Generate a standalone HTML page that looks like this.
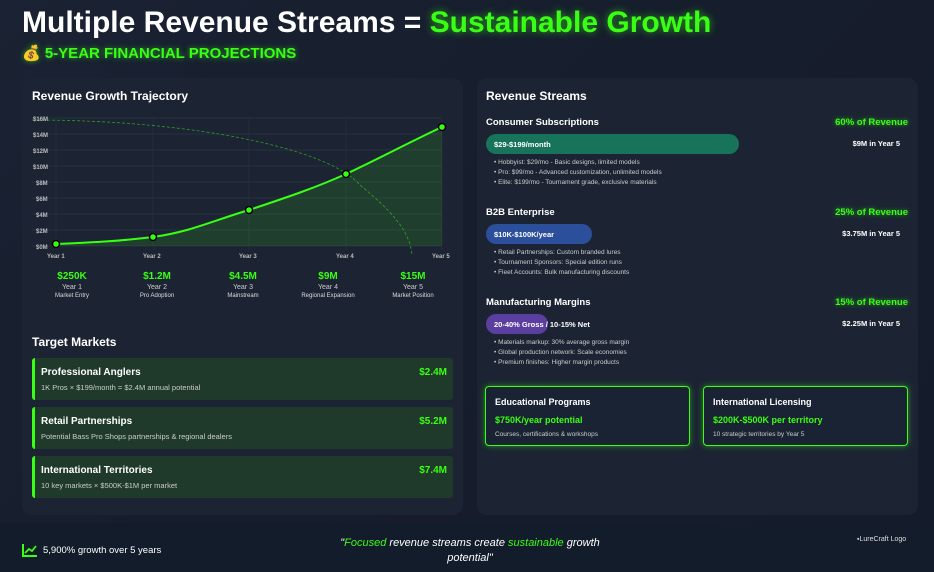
<!DOCTYPE html>
<html><head><meta charset="utf-8"><style>
*{margin:0;padding:0;box-sizing:border-box}
body{width:934px;height:572px;overflow:hidden;background:linear-gradient(135deg,#1a2233 0%,#161d2c 50%,#141b2b 100%);font-family:"Liberation Sans",sans-serif;color:#fff;position:relative}
.abs{position:absolute}
h1{position:absolute;left:22px;top:6px;font-size:30px;font-weight:bold;letter-spacing:0}
.g{color:#39ff14;text-shadow:0 0 8px rgba(57,255,20,.6)}
.sub{position:absolute;left:22px;top:44px;font-size:15px;font-weight:bold;color:#39ff14;text-shadow:0 0 6px rgba(57,255,20,.6)}
.panel{position:absolute;background:#1c2433;border-radius:10px}
.t{font-size:12px;font-weight:bold}
.vals div{position:absolute;text-align:center;width:100px}
.vals .v{font-size:10px;font-weight:bold;color:#39ff14}
.vals .y{font-size:7px;color:#ccc;margin-top:2px}
.vals .s{font-size:6px;color:#ddd;margin-top:2px}
.card{position:absolute;left:32px;width:421px;height:42px;background:#1f3a2a;border-left:3px solid #39ff14;border-radius:3px}
.card .n{position:absolute;left:6px;top:9px;font-size:10px;font-weight:bold}
.card .d{position:absolute;left:6px;top:25px;font-size:7.5px;color:#ccc}
.card .a{position:absolute;right:6px;top:9px;font-size:10px;font-weight:bold;color:#39ff14}
.sec{position:absolute;left:486px;width:422px}
.sec .n{position:absolute;left:0;top:0;font-size:9.5px;font-weight:bold}
.sec .p{position:absolute;right:0;top:0;font-size:9.5px;font-weight:bold;color:#39ff14;text-shadow:0 0 5px rgba(57,255,20,.6)}
.sec .bar{position:absolute;left:0;top:17px;height:20px;border-radius:10px;font-size:7.5px;font-weight:bold;padding:6px 8px;white-space:nowrap}
.sec .y5{position:absolute;right:8px;top:22px;font-size:7.5px;font-weight:bold}
.sec ul{position:absolute;left:8px;top:41px;list-style:none;font-size:6.5px;color:#ccc;line-height:10px}
.box{position:absolute;top:386px;width:205px;height:60px;border:1.5px solid #39ff14;border-radius:4px;box-shadow:0 0 6px rgba(57,255,20,.5);background:#1a2333}
.box .n{position:absolute;left:9px;top:10px;font-size:9px;font-weight:bold}
.box .v{position:absolute;left:9px;top:28px;font-size:9px;font-weight:bold;color:#39ff14}
.box .d{position:absolute;left:9px;top:44px;font-size:6.5px;color:#ccc}
</style></head><body>
<h1>Multiple Revenue Streams = <span class="g">Sustainable Growth</span></h1>
<div class="sub">💰 5-YEAR FINANCIAL PROJECTIONS</div>

<div class="panel" style="left:22px;top:78px;width:441px;height:437px"></div>
<div class="abs t" style="left:32px;top:89px">Revenue Growth Trajectory</div>
<svg class="abs" style="left:0;top:0" width="470" height="310">
<g stroke="#2a3344" stroke-width="0.7">
<line x1="32" y1="118" x2="442" y2="118"/><line x1="32" y1="134" x2="442" y2="134"/><line x1="32" y1="150" x2="442" y2="150"/><line x1="32" y1="166" x2="442" y2="166"/><line x1="32" y1="182" x2="442" y2="182"/><line x1="32" y1="198" x2="442" y2="198"/><line x1="32" y1="214" x2="442" y2="214"/><line x1="32" y1="230" x2="442" y2="230"/><line x1="32" y1="246" x2="442" y2="246"/>
<line x1="56" y1="118" x2="56" y2="250"/><line x1="153" y1="118" x2="153" y2="250"/><line x1="249" y1="118" x2="249" y2="250"/><line x1="346" y1="118" x2="346" y2="250"/><line x1="442" y1="118" x2="442" y2="250"/>
</g>
<path d="M56,244 C100,242 120,241 153,237 C190,232 215,220 249,210 C285,198 315,188 346,174 C380,158 410,142 442,127 L442,246 L56,246Z" fill="rgba(57,255,20,0.12)"/>
<path d="M56,244 C100,242 120,241 153,237 C190,232 215,220 249,210 C285,198 315,188 346,174 C380,158 410,142 442,127" fill="none" stroke="#39ff14" stroke-width="2"/>
<path d="M32,120 C200,120 330,150 360,185 C390,210 410,230 412,255" fill="none" stroke="#39ff14" stroke-opacity=".55" stroke-width="0.8" stroke-dasharray="3,2"/>
<g fill="#39ff14" stroke="#000" stroke-width="1.5"><circle cx="56" cy="244" r="3.5"/><circle cx="153" cy="237" r="3.5"/><circle cx="249" cy="210" r="3.5"/><circle cx="346" cy="174" r="3.5"/><circle cx="442" cy="127" r="3.5"/></g>
<g font-size="6" fill="#bbb" font-weight="bold" font-family="Liberation Sans"><text x="33" y="121">$16M</text><text x="33" y="137">$14M</text><text x="33" y="153">$12M</text><text x="33" y="169">$10M</text><text x="36" y="185">$8M</text><text x="36" y="201">$6M</text><text x="36" y="217">$4M</text><text x="36" y="233">$2M</text><text x="36" y="249">$0M</text>
<text x="47" y="258">Year 1</text><text x="143" y="258">Year 2</text><text x="239" y="258">Year 3</text><text x="336" y="258">Year 4</text><text x="432" y="258">Year 5</text></g>
</svg>
<div class="vals">
<div style="left:22px;top:271px"><p class="v">$250K</p><p class="y">Year 1</p><p class="s">Market Entry</p></div>
<div style="left:107px;top:271px"><p class="v">$1.2M</p><p class="y">Year 2</p><p class="s">Pro Adoption</p></div>
<div style="left:193px;top:271px"><p class="v">$4.5M</p><p class="y">Year 3</p><p class="s">Mainstream</p></div>
<div style="left:278px;top:271px"><p class="v">$9M</p><p class="y">Year 4</p><p class="s">Regional Expansion</p></div>
<div style="left:363px;top:271px"><p class="v">$15M</p><p class="y">Year 5</p><p class="s">Market Position</p></div>
</div>
<div class="abs t" style="left:32px;top:335px">Target Markets</div>
<div class="card" style="top:358px"><div class="n">Professional Anglers</div><div class="d">1K Pros × $199/month = $2.4M annual potential</div><div class="a">$2.4M</div></div>
<div class="card" style="top:407px"><div class="n">Retail Partnerships</div><div class="d">Potential Bass Pro Shops partnerships &amp; regional dealers</div><div class="a">$5.2M</div></div>
<div class="card" style="top:456px"><div class="n">International Territories</div><div class="d">10 key markets × $500K-$1M per market</div><div class="a">$7.4M</div></div>

<div class="panel" style="left:477px;top:78px;width:441px;height:437px"></div>
<div class="abs t" style="left:486px;top:89px">Revenue Streams</div>
<div class="sec" style="top:117px"><div class="n">Consumer Subscriptions</div><div class="p">60% of Revenue</div><div class="bar" style="width:253px;background:#17735a">$29-$199/month</div><div class="y5">$9M in Year 5</div><ul><li>• Hobbyist: $29/mo - Basic designs, limited models</li><li>• Pro: $99/mo - Advanced customization, unlimited models</li><li>• Elite: $199/mo - Tournament grade, exclusive materials</li></ul></div>
<div class="sec" style="top:207px"><div class="n">B2B Enterprise</div><div class="p">25% of Revenue</div><div class="bar" style="width:106px;background:#2b4f9a">$10K-$100K/year</div><div class="y5">$3.75M in Year 5</div><ul><li>• Retail Partnerships: Custom branded lures</li><li>• Tournament Sponsors: Special edition runs</li><li>• Fleet Accounts: Bulk manufacturing discounts</li></ul></div>
<div class="sec" style="top:297px"><div class="n">Manufacturing Margins</div><div class="p">15% of Revenue</div><div class="bar" style="width:62px;background:#5b3fa0">20-40% Gross / 10-15% Net</div><div class="y5">$2.25M in Year 5</div><ul><li>• Materials markup: 30% average gross margin</li><li>• Global production network: Scale economies</li><li>• Premium finishes: Higher margin products</li></ul></div>
<div class="box" style="left:485px"><div class="n">Educational Programs</div><div class="v">$750K/year potential</div><div class="d">Courses, certifications &amp; workshops</div></div>
<div class="box" style="left:703px"><div class="n">International Licensing</div><div class="v">$200K-$500K per territory</div><div class="d">10 strategic territories by Year 5</div></div>

<div class="abs" style="left:0;top:523px;width:934px;height:49px;background:#121c2a"></div>
<svg class="abs" style="left:22px;top:543px" width="16" height="14"><path d="M1,1 V13 H15" stroke="#39ff14" stroke-width="2" fill="none"/><path d="M3,10 L7,6 L10,8 L14,3" stroke="#39ff14" stroke-width="1.8" fill="none"/></svg>
<div class="abs" style="left:43px;top:545px;font-size:9.5px">5,900% growth over 5 years</div>
<div class="abs" style="left:322px;top:536px;width:296px;text-align:center;font-size:11px;font-style:italic;line-height:15px">"<span style="color:#39ff14">Focused</span> revenue streams create <span style="color:#39ff14">sustainable</span> growth potential"</div>
<div class="abs" style="left:857px;top:536px;font-size:7px;color:#ddd">▪LureCraft Logo</div>
</body></html>
